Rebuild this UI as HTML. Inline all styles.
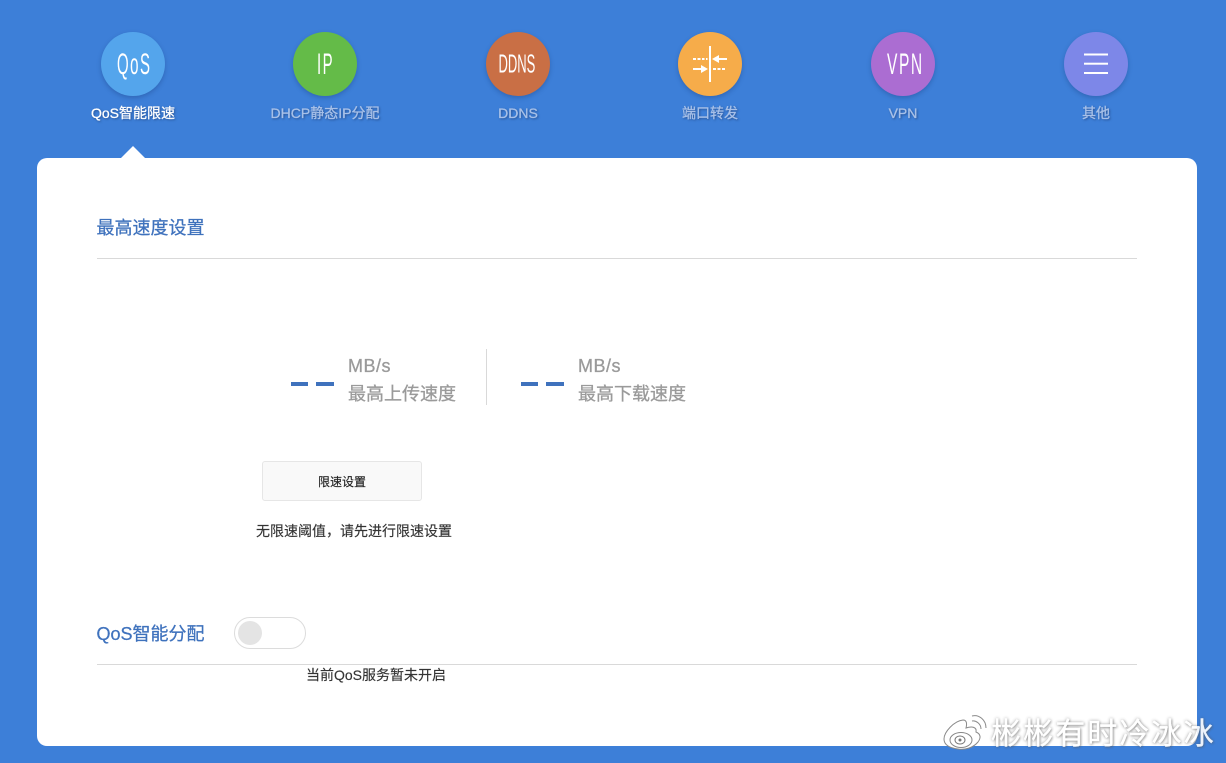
<!DOCTYPE html>
<html lang="zh">
<head>
<meta charset="utf-8">
<title>QoS智能限速</title>
<style>
html,body{margin:0;padding:0}
body{width:1226px;height:763px;overflow:hidden;position:relative;background:#3d7fd8;font-family:"Liberation Sans","Noto Sans CJK SC",sans-serif;}
.a{position:absolute;white-space:nowrap}
.c{position:absolute;top:32px;width:64px;height:64px;border-radius:50%;box-shadow:0 2px 5px rgba(20,50,110,.3)}
.c svg{position:absolute;left:0;top:0}
.c text{font-family:"Liberation Sans",sans-serif;fill:#fff}
.l{position:absolute;top:104px;width:192px;text-align:center;font-size:14px;line-height:18px;color:#a8c1e8;-webkit-text-stroke:.3px #a8c1e8;text-shadow:1px 1px 2px rgba(25,50,100,.7);white-space:nowrap}
.card{position:absolute;left:37px;top:158px;width:1160px;height:588px;background:#fff;border-radius:10px}
.tri{position:absolute;left:121px;top:146px;width:0;height:0;border-left:12px solid transparent;border-right:12px solid transparent;border-bottom:12px solid #fff}
.h{font-size:18px;line-height:24px;color:#3f72bd;-webkit-text-stroke:.25px #3f72bd}
.hr{position:absolute;left:97px;width:1040px;height:1px;background:#d9d9d9}
.g{font-size:18px;line-height:28px;color:#9a9a9a;-webkit-text-stroke:.3px #9a9a9a}
.d{position:absolute;top:381.500px;width:17.500px;height:4.500px;background:#3f72bd}
.t{font-size:14px;line-height:20px;color:#333;-webkit-text-stroke:.15px #333}
</style>
</head>
<body>
<div class="c" style="left:101px;background:#54a5ec"><svg width="64" height="64"><text transform="translate(16,42) scale(.5,1)" font-size="30" letter-spacing="3">QoS</text></svg></div>
<div class="c" style="left:293px;background:#64bb48"><svg width="64" height="64"><text transform="translate(24,42) scale(.5,1)" font-size="30" letter-spacing="3">IP</text></svg></div>
<div class="c" style="left:486px;background:#c96f45"><svg width="64" height="64"><text transform="translate(12.500,40.700) scale(.5,1)" font-size="26">DDNS</text></svg></div>
<div class="c" style="left:678px;background:#f6ac4a"><svg width="64" height="64" fill="#fff" stroke="none">
<rect x="31" y="14" width="2" height="36"/>
<rect x="15" y="26" width="3" height="2"/><rect x="19.500" y="26" width="3" height="2"/><rect x="24" y="26" width="2.500" height="2"/><rect x="28" y="26" width="1.500" height="2"/>
<path d="M34 27l7-4v3h8v2h-8v3z"/>
<path d="M30 37l-7-4v3h-8v2h8v3z"/>
<rect x="35" y="36" width="3" height="2"/><rect x="39.500" y="36" width="3" height="2"/><rect x="44" y="36" width="3" height="2"/>
</svg></div>
<div class="c" style="left:871px;background:#ab6dd2"><svg width="64" height="64"><text transform="translate(16,42) scale(.52,1)" font-size="30" letter-spacing="3">VPN</text></svg></div>
<div class="c" style="left:1064px;background:#7d87e8"><svg width="64" height="64" fill="#fff"><rect x="20" y="21.500" width="24" height="2"/><rect x="20" y="30.700" width="24" height="2"/><rect x="20" y="40" width="24" height="2"/></svg></div>

<div class="l" style="left:37px;color:#fff;-webkit-text-stroke:.3px #fff">QoS智能限速</div>
<div class="l" style="left:229px">DHCP静态IP分配</div>
<div class="l" style="left:422px">DDNS</div>
<div class="l" style="left:614px">端口转发</div>
<div class="l" style="left:807px">VPN</div>
<div class="l" style="left:1000px">其他</div>

<div class="tri"></div>
<div class="card"></div>

<div class="a h" style="left:96.500px;top:216px">最高速度设置</div>
<div class="hr" style="top:258px"></div>

<div class="d" style="left:290.500px"></div><div class="d" style="left:316px"></div>
<div class="a g" style="left:348px;top:352px"><span style="letter-spacing:.5px">MB/s</span><br>最高上传速度</div>
<div class="a" style="left:486px;top:349px;width:1px;height:56px;background:#d9d9d9"></div>
<div class="d" style="left:520.500px"></div><div class="d" style="left:546px"></div>
<div class="a g" style="left:578px;top:352px"><span style="letter-spacing:.5px">MB/s</span><br>最高下载速度</div>

<div class="a" style="left:262px;top:461px;width:158px;height:38px;border:1px solid #e6e6e6;border-radius:3px;background:#f9f9f9;text-align:center;font-size:12px;line-height:40px;color:#222;-webkit-text-stroke:.15px #222">限速设置</div>
<div class="a t" style="left:256px;top:521px">无限速阈值，请先进行限速设置</div>

<div class="a h" style="left:96.500px;top:622px">QoS智能分配</div>
<div class="a" style="left:234px;top:617px;width:70px;height:30px;border:1px solid #dcdcdc;border-radius:16px;background:#fff"></div>
<div class="a" style="left:238px;top:621px;width:24px;height:24px;border-radius:50%;background:#e4e4e4"></div>
<div class="hr" style="top:664px"></div>
<div class="a t" style="left:306px;top:665px">当前QoS服务暂未开启</div>

<svg class="a" style="left:942px;top:712px" width="48" height="40" fill="none">
<path d="M2 27c0-7 10-18 19-19 4 0 4 4 3 8 6-2 11-1 10 4 5 2 5 6 2 10-5 6-13 8-20 7C8 36 2 33 2 27z" fill="#fff" stroke="#8a8a8a" stroke-width="1"/>
<ellipse cx="19" cy="28" rx="11" ry="7.500" stroke="#888" stroke-width="1"/>
<ellipse cx="18" cy="28" rx="5" ry="4" stroke="#777" stroke-width="1"/>
<circle cx="18" cy="28" r="1.500" fill="#777"/>
<path d="M30 6c6-2 12 3 12 10M30 11c3-1 7 2 7 6" stroke="#fff" stroke-width="3"/>
<path d="M30 4c7-2 14 4 14 12M30 9c4-1 9 3 9 8" stroke="#8a8a8a" stroke-width="1"/>
</svg>
<div class="a" style="left:991px;top:717px;font-size:30px;line-height:36px;letter-spacing:2.100px;color:#fff;-webkit-text-stroke:.4px #fff;text-shadow:0 0 3px rgba(90,90,90,.75),1px 1px 2px rgba(90,90,90,.5);opacity:.9">彬彬有时冷冰冰</div>
</body>
</html>
